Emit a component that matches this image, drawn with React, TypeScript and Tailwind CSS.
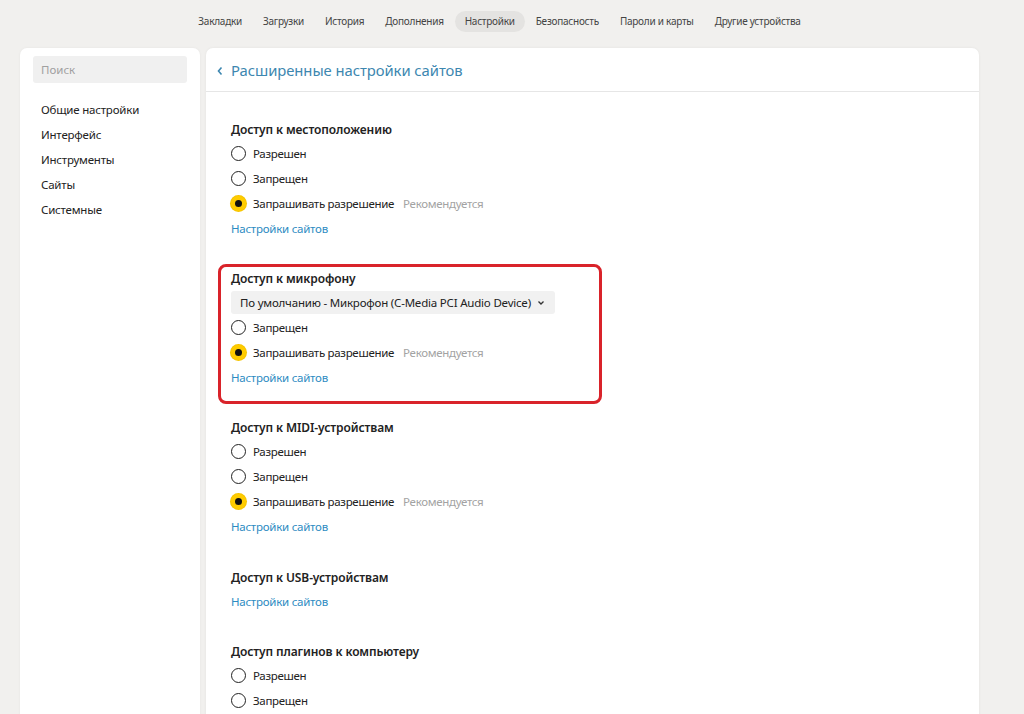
import React from "react";

const font = { fontFamily: '"Noto Sans", "Open Sans", sans-serif' };

function Radio({ checked, label, rec }: { checked?: boolean; label: string; rec?: boolean }) {
  return (
    <div className="flex h-[25px] items-center">
      {checked ? (
        <span className="flex h-[15px] w-[15px] items-center justify-center rounded-full bg-[#ffcc00] shadow-[0_0_0_1px_#f5c400]">
          <span className="h-[7px] w-[7px] rounded-full bg-[#111]" />
        </span>
      ) : (
        <span className="h-[15px] w-[15px] rounded-full border-[1.5px] border-[#222]" />
      )}
      <span className="ml-[7px] text-[11.5px] tracking-[-0.3px] text-[#222]">{label}</span>
      {rec && <span className="ml-[9px] text-[11.5px] tracking-[-0.3px] text-[#a3a3a3]">Рекомендуется</span>}
    </div>
  );
}

function Title({ children }: { children: React.ReactNode }) {
  return (
    <div className="flex h-[25px] items-center pt-[2px] text-[12px] font-semibold tracking-[-0.1px] text-[#222]">
      {children}
    </div>
  );
}

function Link() {
  return (
    <div className="flex h-[25px] items-center text-[11.5px] tracking-[-0.25px] text-[#2d8bc2]">Настройки сайтов</div>
  );
}

export default function App() {
  const nav = ["Закладки", "Загрузки", "История", "Дополнения", "Настройки", "Безопасность", "Пароли и карты", "Другие устройства"];
  return (
    <div className="h-[714px] w-[1024px] overflow-hidden bg-[#f1f0ee]" style={font}>
      <div className="ml-[20px] w-[959px]">
        <div className="flex h-[42px] items-center justify-center gap-[1px] pt-[1px]">
          {nav.map((n) => (
            <span
              key={n}
              className={
                "rounded-full px-[10px] py-[3px] text-[10px] tracking-[-0.25px] text-[#444] " +
                (n === "Настройки" ? "bg-[#e4e3e1]" : "")
              }
            >
              {n}
            </span>
          ))}
        </div>
        <div className="mt-[6px] flex gap-[6px]">
          <div className="h-[700px] w-[180px] rounded-t-[7px] bg-white px-[13px] pt-[8px] shadow-[0_0_3px_rgba(0,0,0,0.05)]">
            <div className="flex h-[27px] items-center rounded-[3px] bg-[#f0f0f0] px-[8px] pt-[1px] text-[11.5px] text-[#a0a0a0]">
              Поиск
            </div>
            <div className="mt-[14px] pl-[8px]">
              {["Общие настройки", "Интерфейс", "Инструменты", "Сайты", "Системные"].map((s) => (
                <div key={s} className="flex h-[25px] items-center text-[11.5px] tracking-[-0.2px] text-[#222]">
                  {s}
                </div>
              ))}
            </div>
          </div>
          <div className="h-[700px] flex-1 rounded-t-[7px] bg-white shadow-[0_0_3px_rgba(0,0,0,0.06)]">
            <div className="flex h-[44px] items-center border-b border-[#e6e6e6] pl-[10px] pt-[2px]">
              <svg width="8" height="10" viewBox="0 0 8 10" className="mr-[7px]">
                <path d="M5.5 1.5 L2.5 5 L5.5 8.5" fill="none" stroke="#3d87b0" strokeWidth="1.6" />
              </svg>
              <span className="text-[14.8px] tracking-[-0.05px] text-[#3d87b0]">Расширенные настройки сайтов</span>
            </div>
            <div className="pl-[25px] pt-[24px]">
              <Title>Доступ к местоположению</Title>
              <Radio label="Разрешен" />
              <Radio label="Запрещен" />
              <Radio checked label="Запрашивать разрешение" rec />
              <Link />

              <div className="relative mt-[24px]">
                <div className="absolute left-[-13px] top-[-1px] h-[140px] w-[384px] rounded-[8px] border-[3px] border-[#d9232a]" />
                <Title>Доступ к микрофону</Title>
                <div className="flex h-[25px] items-center">
                  <div className="flex h-[23px] w-[324px] items-center whitespace-nowrap rounded-[3px] bg-[#f1f1f1] pl-[9px] text-[11.5px] tracking-[-0.2px] text-[#222]">
                    По умолчанию - Микрофон (C-Media PCI Audio Device)
                    <svg width="8" height="6" viewBox="0 0 8 6" className="ml-[6px]">
                      <path d="M1.5 1.5 L4 4 L6.5 1.5" fill="none" stroke="#333" strokeWidth="1.3" />
                    </svg>
                  </div>
                </div>
                <Radio label="Запрещен" />
                <Radio checked label="Запрашивать разрешение" rec />
                <Link />
              </div>

              <div className="mt-[24px]">
                <Title>Доступ к MIDI-устройствам</Title>
                <Radio label="Разрешен" />
                <Radio label="Запрещен" />
                <Radio checked label="Запрашивать разрешение" rec />
                <Link />
              </div>

              <div className="mt-[25px]">
                <Title>Доступ к USB-устройствам</Title>
                <Link />
              </div>

              <div className="mt-[24px]">
                <Title>Доступ плагинов к компьютеру</Title>
                <Radio label="Разрешен" />
                <Radio label="Запрещен" />
              </div>
            </div>
          </div>
        </div>
      </div>
    </div>
  );
}
